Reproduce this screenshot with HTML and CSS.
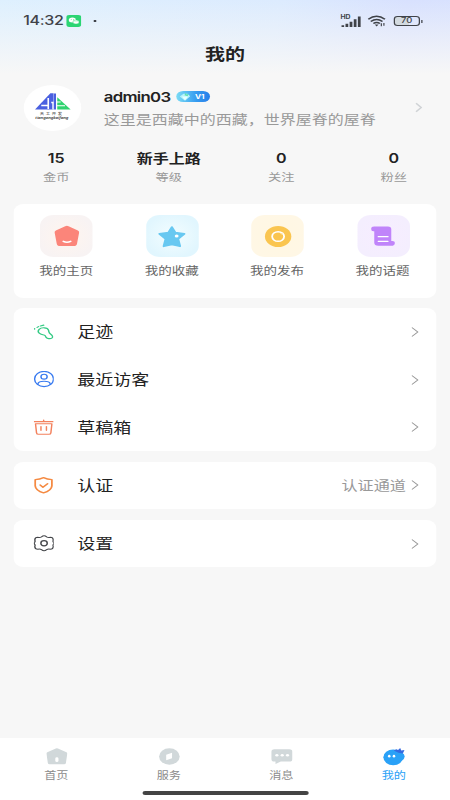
FILE: index.html
```html
<!DOCTYPE html>
<html lang="zh-CN">
<head>
<meta charset="utf-8">
<title>我的</title>
<link rel="stylesheet" href="styles.css">
</head>
<body>
<div class="screen">
  <header class="status">
    <span class="time">14:32</span>
    <svg class="wechat" viewBox="0 0 12 12"><rect width="12" height="12" rx="2.4" fill="#2bd573"/><ellipse cx="4.900" cy="5" rx="2.900" ry="2.500" fill="#fff"/><ellipse cx="7.800" cy="7" rx="2.500" ry="2.100" fill="#fff" stroke="#2bd573" stroke-width=".5"/><g fill="#2bd573"><circle cx="4" cy="4.400" r=".4"/><circle cx="5.800" cy="4.400" r=".4"/><circle cx="7" cy="6.600" r=".3"/><circle cx="8.600" cy="6.600" r=".3"/></g></svg>
    <span class="dot"></span>
    <span class="hd">HD</span>
    <svg class="signal" viewBox="0 0 16 11"><path d="M1.200 11V9.300M4.500 11V7.800M7.800 11V5.800M11.100 11V3.200M14.400 11V.5" stroke="#3f4248" stroke-width="2.200"/></svg>
    <svg class="wifi" viewBox="0 0 16 12"><g fill="none" stroke="#3f4248" stroke-width="1.600"><path d="M.7 4.200q7-6.400 14.200 0M2.800 6.500q5-4.400 10 0M5 8.700q2.800-2.400 5.600 0"/></g><path d="M6.200 9.800h3.200L7.800 11.800z" fill="#3f4248"/><path d="M11.800 8.500v3M14 8v3" stroke="#3f4248"/></svg>
    <span class="battery">70</span><span class="cap"></span>
  </header>
  <h1>我的</h1>
  <section class="profile">
    <div class="avatar">
      <svg viewBox="0 0 46 46"><path d="M9 24.500 21.300 8.300h2.500v16.200z" fill="#4a60e0"/><path d="M26.800 12.300 37.500 24.500H26.800z" fill="#2fd36f"/><path d="M14 20.500h5.500M19.600 13v11M22 17.500h4.500M23.500 24.500v-7" stroke="#fff" stroke-width="1.300"/><path d="M25.500 17h4M26 20.700h7" stroke="#fff" stroke-width="1.100"/><path d="M24 8.500h1.800v16H24z" fill="#4a60e0"/></svg>
      <span class="logo-cn">天工开发</span><span class="logo-en">tiangongkaifang</span>
    </div>
    <div class="who">
      <div class="name"><b>admin03</b><span class="level"><svg viewBox="0 0 12 12"><path d="M1 5.500 4.500 2h4L11 5l-5 5.500z" fill="#b6f3fa"/><path d="M3 5.500h6L6 10z" fill="#e5ffff"/><path d="m6.500 1 1 2 2-1-1 3-3-1z" fill="#60e0b0"/></svg>V1</span></div>
      <p>这里是西藏中的西藏，世界屋脊的屋脊</p>
    </div>
    <svg class="go" viewBox="0 0 7 12"><path d="m1 1 4.800 5L1 11"/></svg>
  </section>
  <section class="stats">
    <div><b>15</b><span>金币</span></div>
    <div><b>新手上路</b><span>等级</span></div>
    <div><b>0</b><span>关注</span></div>
    <div><b>0</b><span>粉丝</span></div>
  </section>
  <section class="card tiles">
    <div><i class="tile red"><svg viewBox="0 0 24 24"><path d="M10.600 1.200q1.400-.8 2.800 0l7.800 4.600q1.300.8 1 2.300l-1.700 11.200q-.4 2.700-2.800 2.700H6.300q-2.400 0-2.800-2.700L1.800 8.100q-.3-1.500 1-2.300z" fill="#fb857a"/><path d="M9 17q3 1.800 6.200 0" fill="none" stroke="#fff" stroke-width="1.500" stroke-linecap="round"/></svg></i><span>我的主页</span></div>
    <div><i class="tile blue"><svg viewBox="0 0 24 24"><path d="m12 2.200 2.900 5.800 7.500 1.200-5.200 5.300 1.600 7.700-6.800-2-6.800 2 1.600-7.700L1.600 9.200 9.100 8z" fill="#68c8f1" stroke="#68c8f1" stroke-width="1.800" stroke-linejoin="round"/><circle cx="16" cy="11.400" r="1.600" fill="#fff"/></svg></i><span>我的收藏</span></div>
    <div><i class="tile yellow"><svg viewBox="0 0 24 24"><circle cx="12" cy="12" r="11" fill="#fac550"/><circle cx="12" cy="12" r="5" fill="none" stroke="#fff" stroke-width="1.500"/><circle cx="15.200" cy="8.700" r="1.200" fill="#fff"/><path d="m14.300 9.800 1.400-1.400" stroke="#fac550" stroke-width=".7"/></svg></i><span>我的发布</span></div>
    <div><i class="tile purple"><svg viewBox="0 0 24 24"><path d="M4.500 1.500H16q2.800 0 2.800 3v12.300h1q2 0 2 1.600 0 3.300-3 3.300H8q-3.400 0-3.400-3.200V6.500H3.800Q2 6.300 2 4.100 2 1.500 4.500 1.500z" fill="#c084fa"/><path d="M8 12.200h8M8 17h8" stroke="#fff" stroke-width="1.300" stroke-linecap="round"/></svg></i><span>我的话题</span></div>
  </section>
  <section class="card list">
    <div class="row"><svg viewBox="0 0 20 20" stroke="#34ca84"><path d="M5.200 6.600C7.500 3.500 13.500 4.200 14.300 7.500c.5 2.400.2 3.300 1.900 4.600 2 1.500 2.800 3.700 1.300 5-1.600 1.300-4.400.6-5.500-.9-.8-1.100-.4-2.400-2.200-2.800C6.500 12.800 2.500 10.300 5.200 6.600z"/><path d="M3.300 4.100 4.600 3.200M6.500 2.400l3.200-1M.8 5.500v.7"/></svg><span>足迹</span><svg class="arrow" viewBox="0 0 6 10"><path d="m.5.5 4.700 4.500L.5 9.500"/></svg></div>
    <div class="row"><svg viewBox="0 0 20 20" stroke="#397bf0"><circle cx="10" cy="9.700" r="9.200"/><circle cx="10" cy="6.900" r="3"/><path d="M4 16.300v-.6q.4-3.300 6-3.300t6 3.300v.6"/></svg><span>最近访客</span><svg class="arrow" viewBox="0 0 6 10"><path d="m.5.5 4.700 4.500L.5 9.500"/></svg></div>
    <div class="row"><svg viewBox="0 0 20 20" stroke="#f3815d"><path d="M.6 3.200h18M9.600 3V1.300M1.700 5.800h15.900l-1 11q-.2 1.700-1.800 1.700H4.500q-1.600 0-1.800-1.700zM7 9.200v4.500M12.300 9.200v4.500"/></svg><span>草稿箱</span><svg class="arrow" viewBox="0 0 6 10"><path d="m.5.5 4.700 4.500L.5 9.500"/></svg></div>
  </section>
  <section class="card">
    <div class="row"><svg viewBox="0 0 20 20" stroke="#f58a42"><path stroke-width="1.700" d="M9.500.8Q13 2.900 17.600 3.200v7.500q-.4 5.700-8.100 8.500-7.700-2.800-8.100-8.500V3.200Q6 2.900 9.500.8z"/><path stroke-width="1.700" d="m6.200 9.700 2.700 2.700 4.500-4.200"/></svg><span>认证</span><em>认证通道</em><svg class="arrow" viewBox="0 0 6 10"><path d="m.5.5 4.700 4.500L.5 9.500"/></svg></div>
  </section>
  <section class="card">
    <div class="row"><svg viewBox="0 0 20 20" stroke="#44464a"><path stroke-width="1.300" d="M7.500 2.200q2.500-2.600 5 0 1.500 1.300 3.500.6 2.900 0 3 3.300-.6 1.500.1 2.700 1 1.200 0 2.400-.7 1.200-.1 2.700-.1 3.300-3 3.300-2-.7-3.500.6-2.500 2.600-5 0-1.500-1.300-3.500-.6-2.900 0-3-3.300.6-1.500-.1-2.700-1-1.200 0-2.400.7-1.200.1-2.700.1-3.300 3-3.300 2 .7 3.500-.6z"/><circle cx="10" cy="10" r="3.100"/></svg><span>设置</span><svg class="arrow" viewBox="0 0 6 10"><path d="m.5.5 4.700 4.500L.5 9.500"/></svg></div>
  </section>
  <nav>
    <div><svg viewBox="0 0 20 20"><path d="M9 .5q1-.6 2 0l8 4.600q1 .6.800 1.700l-1.300 10.700q-.2 1.500-1.700 1.500H3.200q-1.500 0-1.700-1.500L.2 6.800Q0 5.700 1 5.100z" fill="#d1d8da"/><rect x="8.500" y="11" width="3" height="5.500" rx="1.500" fill="#fff"/></svg><span>首页</span></div>
    <div><svg viewBox="0 0 20 20"><circle cx="10" cy="10" r="9.700" fill="#d1d8da"/><path d="m7 8 5.500-2.500v6.700L7 14.500z" fill="#fff"/></svg><span>服务</span></div>
    <div><svg viewBox="0 0 20 20"><path d="M3 1.500h14q3 0 3 3v8.500q0 3-3 3H9l-5 2.800V16H3q-3 0-3-3V4.500q0-3 3-3z" fill="#d1d8da"/><g fill="#fff"><circle cx="5.300" cy="8.500" r="1.500"/><circle cx="10.300" cy="8.500" r="1.500"/><circle cx="15.300" cy="8.500" r="1.500"/></g></svg><span>消息</span></div>
    <div class="on"><svg class="me" viewBox="0 0 21 21"><circle cx="10" cy="11.500" r="9.200" fill="#2aa1f7"/><ellipse cx="11" cy="10.500" rx="9.700" ry="7" fill="#2aa1f7"/><path d="M10.500 3.500 13 2l1.500 1 2-2.500 1 3 3-.5-1.500 4-4-1z" fill="#3569e0"/><g fill="#fff"><ellipse cx="6.300" cy="10.200" rx="1.200" ry="1.600"/><ellipse cx="10.700" cy="10.200" rx="1.200" ry="1.600"/></g></svg><span>我的</span></div>
  </nav>
  <footer><span></span></footer>
</div>
</body>
</html>
```
FILE: styles.css
```css
* { box-sizing: border-box; margin: 0; padding: 0; }
html, body { width: 450px; height: 800px; overflow: hidden; }

/* 360-unit wide layout, widened to fill the viewport */
.screen {
  width: 360px;
  height: 800px;
  transform: scaleX(1.25);
  transform-origin: 0 0;
  display: flex;
  flex-direction: column;
  background:
    linear-gradient(180deg, rgba(247,247,247,0) 0, rgba(247,247,247,.55) 40px, #f7f7f7 74px),
    linear-gradient(100deg, #def0fe 0, #dcebfe 45%, #d8e1fe 65%, #d9e4fe 100%);
  font-family: "Noto Sans", "Noto Sans CJK SC", sans-serif;
  color: #222;
}
svg { display: block; flex: none; }

.status { height: 42px; padding: 0 22px 0 18.5px; display: flex; align-items: center; color: #3f4248; }
.time { font: 500 12.8px/16px Inter, sans-serif; width: 34px; letter-spacing: -.25px; white-space: nowrap; }
.wechat { width: 12px; height: 12px; }
.dot { width: 2px; height: 2px; margin-left: 10px; background: #3f4248; }
.hd { margin-left: auto; align-self: flex-start; margin-top: 14px; font: 700 5.5px/7px Inter, sans-serif; width: 7px; }
.signal { width: 16px; height: 11px; margin-left: -6px; }
.wifi { width: 15px; height: 12px; margin-left: 4.5px; }
.battery { width: 21px; height: 10px; margin-left: 6px; border: 1px solid #3f4248; border-radius: 3px; font: 500 7.5px/8.5px Inter, sans-serif; text-align: center; background: linear-gradient(90deg, #d3dae0 60%, transparent 60%); }
.cap { width: 1.2px; height: 3px; margin-left: 1px; background: #3f4248; }

h1 { height: 24px; font-size: 16px; line-height: 24px; font-weight: 600; text-align: center; }

.profile { height: 46px; margin-top: 18.5px; padding: 0 22px 0 18.5px; display: flex; align-items: center; }
.avatar { width: 46px; height: 46px; border-radius: 50%; background: #fff; display: grid; justify-items: center; align-content: start; flex: none; }
.avatar > * { grid-area: 1 / 1; }
.avatar svg { width: 46px; height: 46px; }
.logo-cn { margin-top: 26px; font-size: 3.5px; line-height: 5px; letter-spacing: 1.3px; }
.logo-en { margin-top: 30.5px; font: italic 500 3.6px/6px "Noto Sans", sans-serif; letter-spacing: -.05px; }
.who { margin-left: 18.5px; flex: 1; white-space: nowrap; }
.name { display: flex; align-items: center; height: 22px; }
.name b { font: 600 13.4px/22px Inter, sans-serif; width: 53px; letter-spacing: -.55px; }
.level { width: 27px; height: 11px; margin-left: 5px; border-radius: 6px; background: linear-gradient(90deg, #7bdcf5, #359bf0 60%, #287ee9); color: #fff; font: 700 6.5px/12px Inter, sans-serif; display: flex; align-items: center; gap: 3px; padding-left: 2px; }
.level svg { width: 10px; height: 10px; }
.who p { height: 22px; line-height: 22px; font-size: 12.8px; color: #999; font-family: "Noto Sans CJK SC", sans-serif; }
.go { width: 6px; height: 11px; fill: none; stroke: #d0d3d6; stroke-width: 1.5; }

.stats { display: grid; grid-template-columns: repeat(4, 1fr); margin-top: 18.5px; height: 55px; text-align: center; }
.stats b { display: block; height: 19px; font: 600 12.8px/19px Inter, "Noto Sans CJK SC", sans-serif; }
.stats span { display: block; font-size: 10.6px; line-height: 18px; color: #999; }

.card { margin: 0 11.25px 10.5px; border-radius: 8px; background: #fff; flex: none; }
.tiles { height: 93.5px; padding-top: 11px; display: grid; grid-template-columns: repeat(4, 1fr); justify-items: center; text-align: center; }
.tile { display: grid; place-items: center; width: 42px; height: 42px; border-radius: 11px; margin: 0 auto; }
.tile svg { width: 23px; height: 23px; }
.tiles span { display: block; font-size: 10.8px; line-height: 18px; margin-top: 4.5px; margin-left: -1px; color: #666; }
.red { background: radial-gradient(#fff5ee, #f8f3f3 75%); }
.blue { background: radial-gradient(#f3fdff, #e1f6fe 75%); }
.yellow { background: radial-gradient(#fff7e2, #fff7e5 75%); }
.purple { background: radial-gradient(#f7edff, #f4eefe 75%); }

.row { height: 47.7px; padding: 0 14px 0 15.6px; display: flex; align-items: center; }
.row > svg:first-child { width: 16.5px; height: 16.5px; fill: none; stroke-width: 1.4; stroke-linecap: round; stroke-linejoin: round; }
.row span { margin: 1px 0 0 18.4px; font-size: 14.4px; line-height: 24px; color: #222; }
.row em { margin-left: auto; font-style: normal; font-size: 12.9px; line-height: 20px; color: #999; }
.row .arrow { width: 6px; height: 10px; margin-left: 4px; fill: none; stroke: #999; stroke-width: 1; }
.row span + .arrow { margin-left: auto; }

nav { height: 50px; margin-top: auto; padding-top: 8.5px; background: #fff; display: grid; grid-template-columns: repeat(4, 1fr); justify-items: center; flex: none; }
nav div { text-align: center; }
nav svg { width: 17px; height: 19px; margin: 0 auto; }
nav .me { width: 18px; }
nav span { display: block; font-size: 9.7px; line-height: 16px; margin-top: 2.2px; color: #8c8c8c; }
nav .on span { color: #2aa1f7; }
footer { height: 12px; background: #fff; padding-top: 3px; flex: none; }
footer span { display: block; width: 133px; height: 3.5px; margin: 0 auto; border-radius: 2px; background: #444; }
```
